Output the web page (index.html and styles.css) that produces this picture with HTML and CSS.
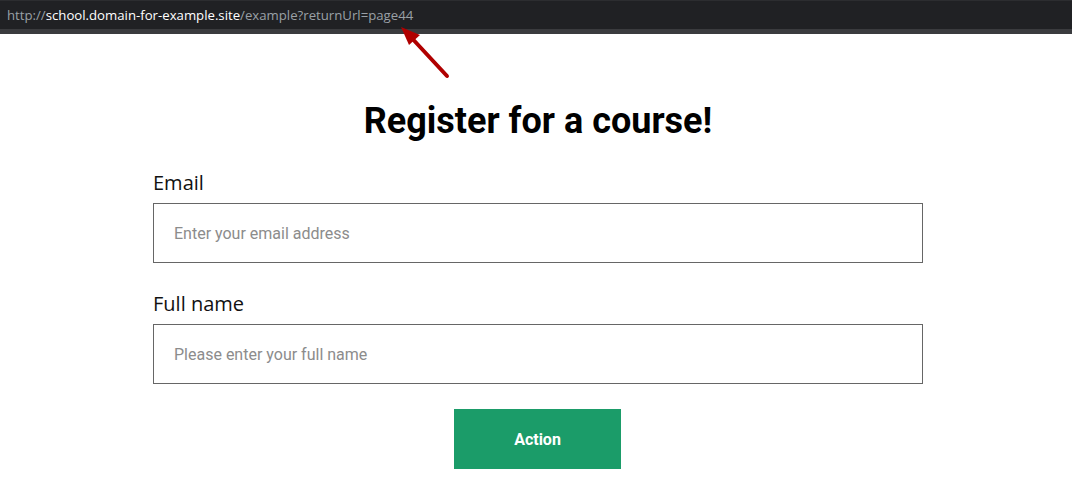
FILE: index.html
```html
<!DOCTYPE html>
<html lang="en">
<head>
<meta charset="utf-8">
<title>Register for a course</title>
<link rel="stylesheet" href="styles.css">
</head>
<body>
<header class="urlbar">
  <div class="url"><span class="dim">http://</span><span class="host">school.domain-for-example.site</span><span class="dim">/example?returnUrl=page44</span></div>
</header>
<div class="urlbar-edge"></div>
<svg class="pointer" width="80" height="70" viewBox="0 0 80 70" aria-hidden="true">
  <line x1="67" y1="66" x2="28" y2="24" stroke="#b00000" stroke-width="4" stroke-linecap="round"/>
  <polygon points="21,17 40,25 29,35" fill="#b00000"/>
</svg>
<main class="page">
  <h1 class="title">Register for a course!</h1>
  <form class="form">
    <label class="field">
      <span class="label">Email</span>
      <input class="input" type="text" placeholder="Enter your email address">
    </label>
    <label class="field">
      <span class="label">Full name</span>
      <input class="input" type="text" placeholder="Please enter your full name">
    </label>
    <div class="actions">
      <button class="btn" type="button">Action</button>
    </div>
  </form>
</main>
</body>
</html>
```
FILE: styles.css
```css
* { box-sizing: border-box; }
html, body { margin: 0; padding: 0; background: #fff; }
body { font-family: "Open Sans", "Noto Sans", sans-serif; color: #111; }

.urlbar {
  height: 29px;
  background: #202124;
  border-top: 1px solid #2c2d30;
  display: flex;
  align-items: center;
  padding-left: 7px;
}
.url {
  font-family: "Open Sans", sans-serif;
  font-size: 13.2px;
  color: #9aa0a6;
  white-space: nowrap;
}
.url .host { color: #ffffff; }
.urlbar-edge { height: 5px; background: #3a3b3e; }

.pointer { position: absolute; left: 380px; top: 10px; }

.page {
  width: 774px;
  margin: 0 auto;
  padding-left: 4px;
}
.title {
  font-family: Roboto, sans-serif;
  font-weight: 700;
  font-size: 36px;
  line-height: 44px;
  text-align: center;
  margin: 65px 0 0;
  color: #000;
}
.form { display: flex; flex-direction: column; margin-top: 25px; }
.field { display: flex; flex-direction: column; }
.field + .field { margin-top: 26px; }
.label {
  font-family: "Open Sans", sans-serif;
  font-size: 20px;
  line-height: 28px;
  color: #111;
  padding-top: 1px;
  margin-bottom: 6px;
}
.input {
  height: 60px;
  width: 100%;
  border: 1px solid #666;
  border-radius: 0;
  padding: 0 20px;
  font-family: Roboto, sans-serif;
  font-size: 16px;
  color: #333;
  outline: none;
}
.input::placeholder { color: #8c8c8c; }
.actions { display: flex; justify-content: center; margin-top: 25px; padding-right: 1px; }
.btn {
  width: 167px;
  height: 60px;
  border: 0;
  background: #1b9c69;
  color: #fff;
  font-family: Roboto, sans-serif;
  font-weight: 700;
  font-size: 16px;
  cursor: pointer;
}
```
